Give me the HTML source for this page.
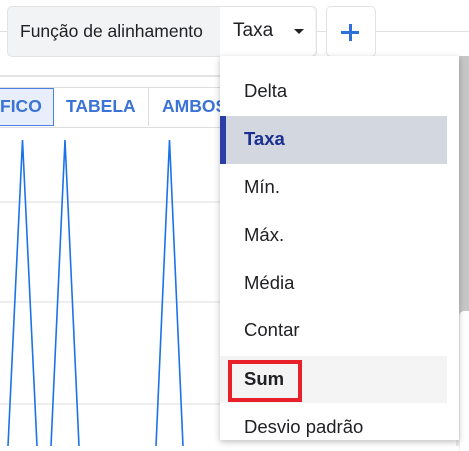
<!DOCTYPE html>
<html><head><style>
body{margin:0;width:469px;height:446px;overflow:hidden;background:#fff;font-family:"Liberation Sans",sans-serif;position:relative}
.a{position:absolute}
.item{position:absolute;left:244px;font-size:18.5px;color:#202124}
</style></head><body>
<div class="a" style="left:0;top:31px;width:469px;height:1px;background:#e0e0e0"></div>
<div class="a" style="left:7px;top:6px;width:308px;height:49px;background:#f1f3f4;border:1px solid #e3e3e3;border-radius:5px"></div>
<div class="a" style="left:220px;top:7px;width:95px;height:49px;background:#fff;border-radius:0 5px 5px 0"></div>
<div class="a" style="left:20px;top:21px;font-size:17.5px;color:#202124">Função de alinhamento</div>
<div class="a" style="left:233px;top:20px;font-size:19px;color:#202124">Taxa</div>
<div class="a" style="left:294px;top:29px;width:0;height:0;border-left:5px solid transparent;border-right:5px solid transparent;border-top:5px solid #202124"></div>
<div class="a" style="left:326px;top:6px;width:48px;height:49px;background:#fff;border:1px solid #e3e3e3;border-radius:5px"></div>
<div class="a" style="left:341px;top:31px;width:18px;height:3px;background:#2f6fd8"></div>
<div class="a" style="left:348.5px;top:24px;width:3px;height:17px;background:#2f6fd8"></div>
<div class="a" style="left:0;top:75px;width:220px;height:2px;background:#e5e5e5"></div>
<div class="a" style="left:0;top:87px;width:220px;height:39px;border-top:1px solid #ddd;border-bottom:1px solid #ddd"></div>
<div class="a" style="left:-2px;top:88px;width:54px;height:36px;background:#e8eefb;border:1px solid #4c82df"></div>
<div class="a" style="left:148px;top:88px;width:1px;height:38px;background:#ddd"></div>
<div class="a" style="left:0;top:96px;font-size:17.5px;font-weight:bold;color:#3b73d6">FICO</div>
<div class="a" style="left:66px;top:96px;font-size:17.5px;font-weight:bold;color:#3b73d6">TABELA</div>
<div class="a" style="left:162px;top:96px;font-size:17.5px;font-weight:bold;color:#3b73d6">AMBOS</div>
<svg class="a" style="left:0;top:0" width="469" height="446">
<line x1="0" y1="202" x2="220" y2="202" stroke="#e8e8e8" stroke-width="1.5"/>
<line x1="0" y1="302" x2="220" y2="302" stroke="#e8e8e8" stroke-width="1.5"/>
<line x1="0" y1="404" x2="220" y2="404" stroke="#e8e8e8" stroke-width="1.5"/>
<polyline points="8,446 22.5,140 37,446" fill="none" stroke="#1a73e8" stroke-width="1.6"/>
<polyline points="51,446 65,140 79,446" fill="none" stroke="#1a73e8" stroke-width="1.6"/>
<polyline points="156,446 169.5,140 183,446" fill="none" stroke="#1a73e8" stroke-width="1.6"/>
</svg>
<div class="a" style="left:456px;top:56px;width:13px;height:390px;background:#e8e8e8"></div>
<div class="a" style="left:456px;top:56px;width:13px;height:322px;background:#c6c6c6"></div>
<div class="a" style="left:459px;top:311px;width:12px;height:140px;background:#fff;border-radius:5px 0 0 0;border-left:1px solid #eee"></div>
<div class="a" style="left:220px;top:56px;width:239px;height:384px;background:#fff;box-shadow:0 2px 6px rgba(0,0,0,.25)"></div>
<div class="a" style="left:220px;top:116px;width:227px;height:48px;background:#d3d7e0"></div>
<div class="a" style="left:220px;top:116px;width:6px;height:48px;background:#2a3ea8"></div>
<div class="a" style="left:220px;top:356px;width:227px;height:47px;background:#f4f4f4"></div>
<div class="item" style="top:80px">Delta</div>
<div class="item" style="top:128px;color:#1a2f8f;font-weight:bold">Taxa</div>
<div class="item" style="top:176px">Mín.</div>
<div class="item" style="top:224px">Máx.</div>
<div class="item" style="top:272px">Média</div>
<div class="item" style="top:319px">Contar</div>
<div class="a" style="left:228px;top:360px;width:66px;height:34px;border:4px solid #e8202a"></div>
<div class="item" style="top:368px;font-weight:bold">Sum</div>
<div class="item" style="top:416px">Desvio padrão</div>
</body></html>
